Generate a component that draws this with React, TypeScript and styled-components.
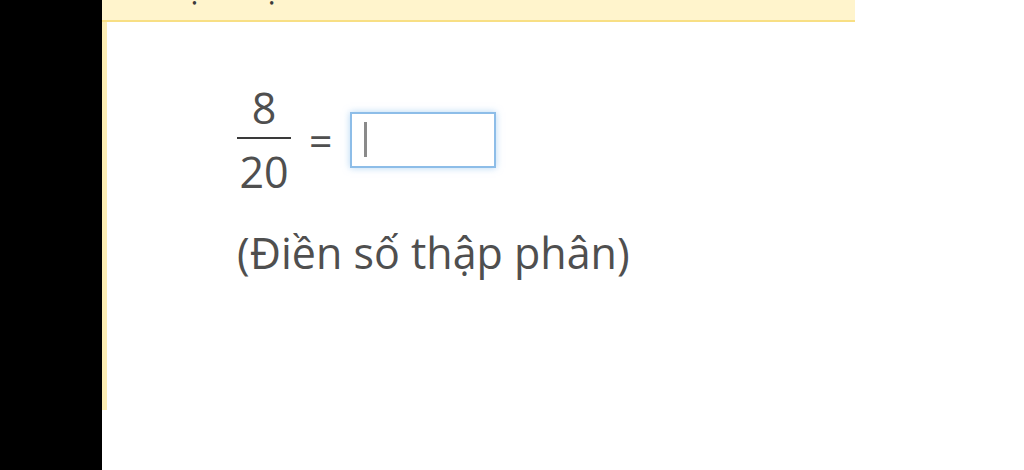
import styled, { createGlobalStyle } from "styled-components";

const GlobalStyle = createGlobalStyle`
  html, body {
    margin: 0;
    padding: 0;
    background: #fff;
  }
  body {
    font-family: "Open Sans", "Noto Sans", sans-serif;
    color: #4f4f4f;
  }
`;

const Page = styled.div`
  display: flex;
  height: 470px;
  overflow: hidden;
`;

const Sidebar = styled.div`
  width: 102px;
  flex-shrink: 0;
  background: #000;
`;

const Card = styled.div`
  width: 753px;
  height: 410px;
  display: flex;
  flex-direction: column;
  border-left: 5px solid #fcedb4;
  box-sizing: border-box;
`;

const Banner = styled.div`
  height: 20px;
  margin-left: -5px;
  background: #fff4cc;
  border-bottom: 2px solid #f8df84;
  overflow: hidden;
`;

const BannerText = styled.div`
  font-size: 34px;
  line-height: 34px;
  color: #3a3a3a;
  white-space: nowrap;
  margin-top: -31px;
  padding-left: 3px;
`;

const Body = styled.div`
  padding: 64px 0 0 130px;
  display: flex;
  flex-direction: column;
  gap: 35px;
`;

const Row = styled.div`
  display: flex;
  align-items: center;
`;

const Fraction = styled.div`
  display: flex;
  flex-direction: column;
  align-items: center;
  font-size: 43px;
  line-height: 43px;
  width: 54px;
`;

const Bar = styled.div`
  width: 54px;
  height: 2px;
  background: #3a3a3a;
  margin: 8px 0 11px;
`;

const Equals = styled.span`
  font-size: 41px;
  line-height: 40px;
  margin: 0 18px 0 18px;
`;

const AnswerBox = styled.div`
  width: 146px;
  height: 56px;
  box-sizing: border-box;
  border: 2px solid #8dbde8;
  box-shadow: 0 0 7px rgba(120, 180, 235, 0.55);
  display: flex;
  align-items: center;
  padding-left: 12px;
`;

const Caret = styled.span`
  width: 3px;
  height: 35px;
  background: #8a8a8a;
`;

const Hint = styled.div`
  font-size: 43px;
  line-height: 50px;
`;

export default function App() {
  return (
    <>
      <GlobalStyle />
      <Page>
        <Sidebar />
        <Card>
          <Banner>
            <BannerText>Ta thực hiện chia tử số cho mẫu số để đổi ra số thập phân</BannerText>
          </Banner>
          <Body>
            <Row>
              <Fraction>
                <span>8</span>
                <Bar />
                <span>20</span>
              </Fraction>
              <Equals>=</Equals>
              <AnswerBox>
                <Caret />
              </AnswerBox>
            </Row>
            <Hint>(Điền số thập phân)</Hint>
          </Body>
        </Card>
      </Page>
    </>
  );
}
